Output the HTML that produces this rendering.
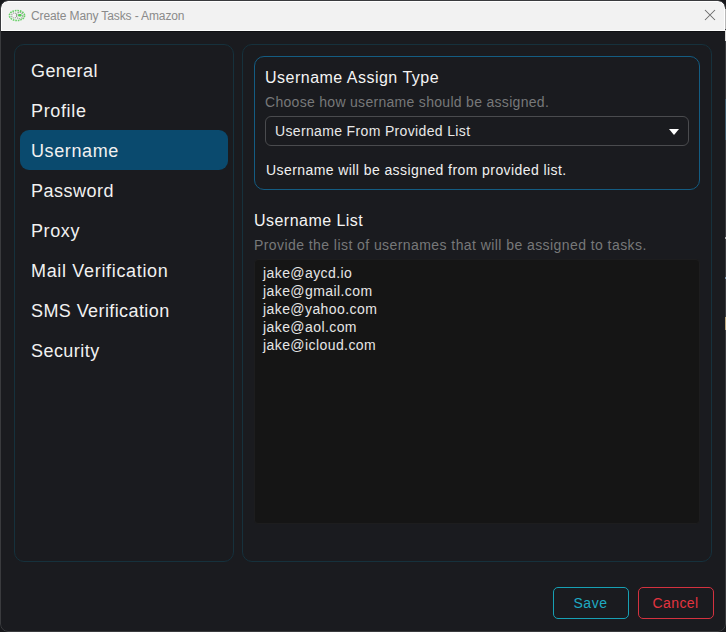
<!DOCTYPE html>
<html><head><meta charset="utf-8">
<style>
*{margin:0;padding:0;box-sizing:border-box}
html,body{width:726px;height:632px;overflow:hidden;background:#17181b}
body{position:relative;font-family:"Liberation Sans",sans-serif}
.win{position:absolute;left:0;top:0;width:726px;height:632px;border-radius:8px;background:#1a1b1f;overflow:hidden}
.wb{position:absolute;left:0;top:0;width:726px;height:632px;border-radius:8px;border:1px solid #3a3b3e}
.tb{position:absolute;left:1px;top:1px;width:724px;height:30px;background:#f2f2f2;border:1px solid #ffffff;border-bottom:1px solid #fdfdfd;border-radius:7px 7px 0 0}
.tbline{position:absolute;left:1px;top:31px;width:724px;height:1px;background:#0f1013}
.ttl{position:absolute;left:31px;top:9px;font-size:12px;color:#8a8a8a;letter-spacing:-0.12px;white-space:nowrap}
.abs{position:absolute;white-space:nowrap}
.box{position:absolute;border:1px solid #16313c;border-radius:10px}
.item{position:absolute;left:31px;font-size:18px;color:#f1f1f1;line-height:20px}
.active{position:absolute;left:20px;top:130px;width:208px;height:40px;background:#0a4a6e;border-radius:9px}
.card{position:absolute;left:254px;top:56px;width:446px;height:134px;border:1px solid #145c82;border-radius:10px}
.h{font-size:16px;color:#f4f4f4;line-height:18px}
.sub{font-size:14px;color:#777879;line-height:16px}
.txt{font-size:14px;color:#f0f0f0;line-height:16px}
.sel{position:absolute;left:265px;top:116px;width:424px;height:30px;border:1px solid #4a4b4e;border-radius:6px}
.ta{position:absolute;left:254px;top:259px;width:446px;height:265px;background:#151515;border:1px solid #1d1d1e;border-radius:4px}
.btn{position:absolute;top:587px;width:76px;height:32px;border-radius:5px;font-size:14px;text-align:center;line-height:30px}
</style></head><body>
<div class="win">
  <div class="tb"></div>
  <div class="tbline"></div>
  <svg class="abs" style="left:8px;top:9px" width="18" height="13" viewBox="0 0 18 13">
    <ellipse cx="9" cy="6.5" rx="7.6" ry="5" fill="none" stroke="#66d066" stroke-width="1.6" stroke-dasharray="1.6 0.9"/>
    <circle cx="6.2" cy="6.5" r="2.6" fill="none" stroke="#9aa89a" stroke-width="1.1" stroke-dasharray="1.3 0.8"/>
    <circle cx="11.6" cy="6.5" r="3.2" fill="none" stroke="#8aa08a" stroke-width="1.1" stroke-dasharray="1.3 0.8"/>
    <rect x="10" y="5" width="3.6" height="2.6" rx="1" fill="#4fd04f"/>
  </svg>
  <div class="ttl">Create Many Tasks - Amazon</div>
  <svg class="abs" style="left:704px;top:9px" width="12" height="12" viewBox="0 0 12 12">
    <path d="M1 1L11 11M11 1L1 11" stroke="#6a6a6a" stroke-width="1.05"/>
  </svg>

  <div class="box" style="left:14px;top:44px;width:220px;height:518px"></div>
  <div class="active"></div>
  <div class="item" style="top:61px;letter-spacing:0.39px">General</div>
  <div class="item" style="top:101px;letter-spacing:0.65px">Profile</div>
  <div class="item" style="top:141px;letter-spacing:0.6px">Username</div>
  <div class="item" style="top:181px;letter-spacing:0.5px">Password</div>
  <div class="item" style="top:221px;letter-spacing:0.6px">Proxy</div>
  <div class="item" style="top:261px;letter-spacing:0.67px">Mail Verification</div>
  <div class="item" style="top:301px;letter-spacing:0.41px">SMS Verification</div>
  <div class="item" style="top:341px;letter-spacing:0.45px">Security</div>

  <div class="box" style="left:242px;top:44px;width:470px;height:518px"></div>
  <div class="card"></div>
  <div class="abs h" style="left:265px;top:69px;letter-spacing:0.49px">Username Assign Type</div>
  <div class="abs sub" style="left:265px;top:94px;letter-spacing:0.3px">Choose how username should be assigned.</div>
  <div class="sel"></div>
  <div class="abs txt" style="left:275px;top:123px;letter-spacing:0.35px;color:#e8e8e8">Username From Provided List</div>
  <svg class="abs" style="left:668px;top:128px" width="12" height="8" viewBox="0 0 12 8"><path d="M1 1H11L6 7Z" fill="#ffffff"/></svg>
  <div class="abs txt" style="left:266px;top:162px;letter-spacing:0.42px">Username will be assigned from provided list.</div>

  <div class="abs h" style="left:254px;top:212px;letter-spacing:0.47px">Username List</div>
  <div class="abs sub" style="left:254px;top:237px;letter-spacing:0.43px">Provide the list of usernames that will be assigned to tasks.</div>
  <div class="ta"></div>
  <div class="abs txt" style="left:263px;top:264px;line-height:18px;letter-spacing:0.42px;color:#e6e6e6">jake@aycd.io<br>jake@gmail.com<br>jake@yahoo.com<br>jake@aol.com<br>jake@icloud.com</div>

  <div class="btn" style="left:553px;border:1px solid #17a0b4;color:#1eaac2;letter-spacing:0.5px;text-indent:-1px">Save</div>
  <div class="btn" style="left:638px;border:1px solid #d4323f;color:#e2343f;letter-spacing:0.4px;text-indent:-1px">Cancel</div>
  <div class="wb"></div>
  <div style="position:absolute;left:725px;top:9px;width:1px;height:20px;background:#b8b8b8"></div>
  <div style="position:absolute;left:725px;top:30px;width:1px;height:11px;background:#d8d8d8"></div>
  <div style="position:absolute;left:725px;top:99px;width:1px;height:41px;background:#3d5868"></div>
  <div style="position:absolute;left:725px;top:237px;width:1px;height:2px;background:#b0b0b0"></div>
  <div style="position:absolute;left:725px;top:277px;width:1px;height:2px;background:#7890a8"></div>
  <div style="position:absolute;left:725px;top:317px;width:1px;height:13px;background:#b8a47c"></div>
</div>
</body></html>
